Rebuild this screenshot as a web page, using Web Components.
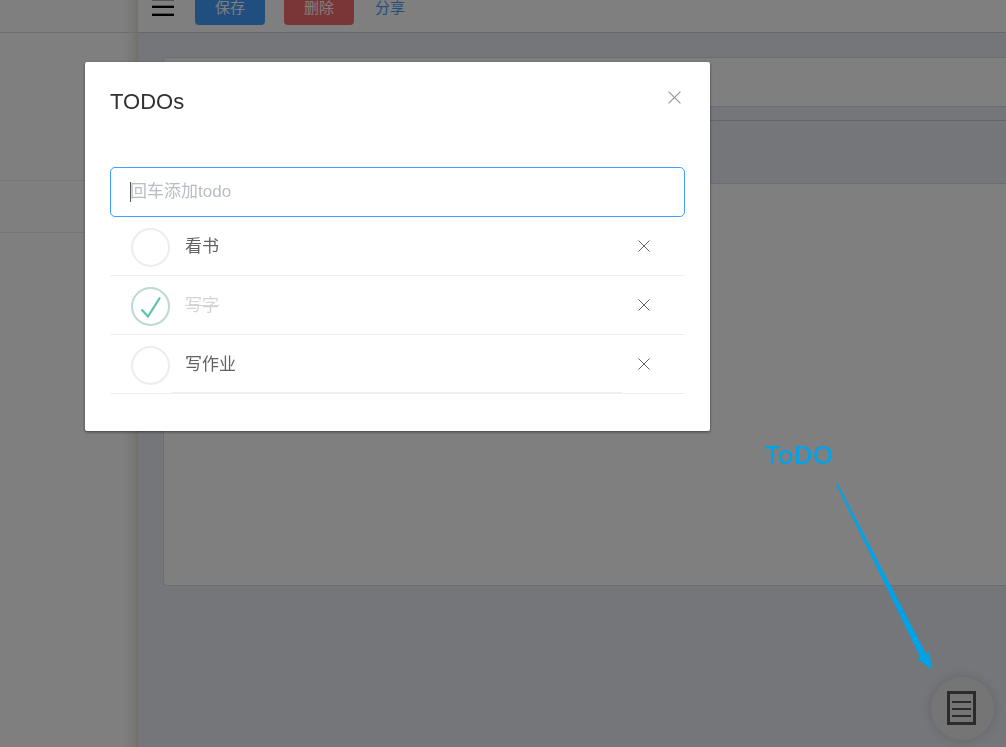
<!DOCTYPE html>
<html lang="zh-CN">
<head>
<meta charset="utf-8">
<title>TODOs</title>
<style>
  html, body { height: 100%; }
  body { margin: 0; overflow: hidden; font-family: "Liberation Sans", "Noto Sans CJK SC", sans-serif; color: #606266; }
</style>
</head>
<body>
<app-page></app-page>
<script>
const define = (name, html, setup) => {
  const tpl = document.createElement('template');
  tpl.innerHTML = html;
  customElements.define(name, class extends HTMLElement {
    connectedCallback() {
      if (this.shadowRoot) return;
      const root = this.attachShadow({ mode: 'open' });
      root.append(tpl.content.cloneNode(true));
      if (setup) setup(this, root);
    }
  });
};

define('side-panel', `
<style>
  :host { display: block; background: linear-gradient(to left, #e0e0d8, #f2f2ee 6px, #fff 16px); }
  div { box-sizing: border-box; border-bottom: 1px solid #ececec; }
  .head { height: 33px; border-color: #dcdcdc; }
  .group { height: 148px; }
  .item { height: 52px; }
</style>
<div class="head"></div><div class="group"></div><div class="item"></div>`);

define('action-button', `
<style>
  :host { display: block; }
  button { display: block; width: 70px; height: 36px; border: 0; border-radius: 4px; padding: 0 0 2px; background: #409eff; color: #fff; font: inherit; font-size: 15px; }
  :host([kind="danger"]) button { background: #f56c6c; }
</style>
<button type="button"><slot></slot></button>`);

define('top-bar', `
<style>
  :host { box-sizing: border-box; display: flex; align-items: flex-end; height: 33px; overflow: hidden; padding: 0 14px 7px; background: #fff; border-bottom: 1px solid #d0d1d6; }
  .menu { border: 0; padding: 0; background: none; width: 22px; height: 25px; flex: none; }
  svg { display: block; }
  action-button { margin-left: 19px; flex: none; }
  .menu + action-button { margin-left: 21px; }
  a { margin-left: 21px; height: 25px; line-height: 16px; font-size: 15px; color: #409eff; text-decoration: none; }
</style>
<button class="menu" type="button" aria-label="菜单">
  <svg width="22" height="25" viewBox="0 0 22 25"><path fill="#aaa" d="M0 0h22v1H0zM0 5h22v1H0zM0 13h22v1H0z"/><path d="M0 6h22v2H0zM0 14h22v2H0z"/></svg>
</button>
<action-button>保存</action-button>
<action-button kind="danger">删除</action-button>
<a href="#share">分享</a>`);

define('content-card', `
<style>
  :host { box-sizing: border-box; display: block; background: #fff; border: 1px solid #dcdde3; border-right: 0; border-radius: 4px 0 0 4px; }
</style><slot></slot>`);

define('main-view', `
<style>
  :host { display: flex; flex-direction: column; background: #ebedf5; min-width: 0; }
  content-card { margin-left: 25px; }
  .first { margin-top: 24px; height: 50px; }
  hr { width: 100%; border: 0; height: 1px; margin: 13px 0 62px; background: #cacbd1; }
  .second { height: 403px; }
</style>
<top-bar></top-bar>
<content-card class="first"></content-card>
<hr>
<content-card class="second"></content-card>`);

define('todo-fab', `
<style>
  :host { display: block; }
  button { display: grid; place-items: center; width: 63px; height: 63px; padding: 0; border: 0; border-radius: 50%; background: #eaeaea; box-shadow: 0 0 12px rgba(0,0,0,.16); }
</style>
<button type="button" aria-label="TODO">
  <svg width="31" height="35" viewBox="0 0 31 35" fill="none" stroke="#565656"><path stroke-width="3" d="M1.5 1.500h26v31h-26z"/><path stroke-width="2" d="M5 11h19M5 18h19M5 25h19"/></svg>
</button>`);

define('cross-icon', `
<style>:host { display: block; } svg { display: block; width: 100%; height: 100%; }</style>
<svg viewBox="0 0 12 12" fill="none" stroke="currentColor" stroke-width="1"><path d="M.5.5l11 11M11.5.5l-11 11"/></svg>`);

define('todo-item', `
<style>
  :host { box-sizing: border-box; display: flex; height: 59px; padding-left: 21px; border-bottom: 1px solid #ebeef5; font-size: 17px; }
  .tick { display: grid; width: 40px; height: 40px; margin-top: 11px; margin-right: 1px; }
  .tick > * { grid-area: 1 / 1; }
  input { appearance: none; box-sizing: border-box; width: 39px; height: 39px; margin: 0; border: 2px solid #ededed; border-radius: 50%; }
  svg { width: 39px; height: 39px; visibility: hidden; pointer-events: none; }
  input:checked { border-color: #bddad5; }
  input:checked + svg { visibility: visible; }
  label { box-sizing: border-box; flex: 1; padding-left: 13px; line-height: 60px; height: 58px; }
  :host([done]) label { color: #d4d4d4; text-decoration: line-through; }
  :host(:last-of-type) label { border-bottom: 1px solid #ebeef5; }
  button { display: grid; place-items: center; width: 44px; height: 57px; margin-right: 19px; padding: 0; border: 0; background: none; color: #606266; }
  cross-icon { width: 12px; height: 12px; }
</style>
<span class="tick"><input type="checkbox" id="done"><svg viewBox="0 0 39 39" fill="none" stroke="#5dc2af" stroke-width="2.2"><path d="M10.5 22.5l6.500 7 12-19"/></svg></span>
<label for="done"><slot></slot></label>
<button type="button" aria-label="删除"><cross-icon></cross-icon></button>`,
(host, root) => { root.querySelector('input').checked = host.hasAttribute('done'); });

define('todo-dialog', `
<style>
  :host { box-sizing: border-box; display: block; width: 100%; max-width: 625px; padding: 25px 25px 37px; background: #fff; border-radius: 2px; box-shadow: 0 1px 3px rgba(0,0,0,.5); }
  header { display: flex; justify-content: space-between; align-items: flex-start; margin-bottom: 50px; }
  h2 { margin: 0; font-size: 22px; line-height: 30px; font-weight: 400; color: #303133; }
  .close { display: grid; place-items: center; width: 21px; height: 21px; padding: 0; border: 0; background: none; color: #909399; }
  cross-icon { width: 13px; height: 13px; }
  .new { box-sizing: border-box; display: block; width: 100%; height: 50px; padding: 0 19px; border: 1px solid #409eff; border-radius: 5px; outline: 0; font: inherit; font-size: 17px; color: #606266; caret-color: transparent;
    background: linear-gradient(#55575b, #55575b) 19px 14px / 1px 20px no-repeat #fff; }
  .new::placeholder { color: #b8bcc5; opacity: 1; }
</style>
<header><h2>TODOs</h2><button class="close" type="button" aria-label="关闭"><cross-icon></cross-icon></button></header>
<input class="new" type="text" placeholder="回车添加todo" aria-label="回车添加todo">
<slot></slot>`);

define('callout-arrow', `
<style>
  :host { display: block; width: 170px; color: #00a2e8; pointer-events: none; }
  span { display: block; font: 500 26px/28px "Noto Sans", sans-serif; }
  svg { display: block; margin: 14px 0 0 70px; }
</style>
<span>ToDO</span>
<svg width="98" height="190" viewBox="0 0 98 190" fill="currentColor"><path d="M1 2L2.500 1L91 172L94.500 169.500L96.500 187.500L81.500 176L85.500 175.500Z"/></svg>`);

define('app-page', `
<style>
  :host { display: grid; grid-template-columns: 138px minmax(0, 1fr); min-height: 100vh; }
  todo-fab { position: fixed; right: 12px; bottom: 7px; }
  .mask { position: fixed; inset: 0; box-sizing: border-box; padding: 62px 85px; background: rgba(0,0,0,.5); }
  callout-arrow { position: fixed; right: 71px; bottom: 75px; }
</style>
<side-panel></side-panel>
<main-view></main-view>
<todo-fab></todo-fab>
<div class="mask">
  <todo-dialog role="dialog" aria-label="TODOs">
    <todo-item>看书</todo-item>
    <todo-item done>写字</todo-item>
    <todo-item>写作业</todo-item>
  </todo-dialog>
</div>
<callout-arrow></callout-arrow>`);
</script>
</body>
</html>
